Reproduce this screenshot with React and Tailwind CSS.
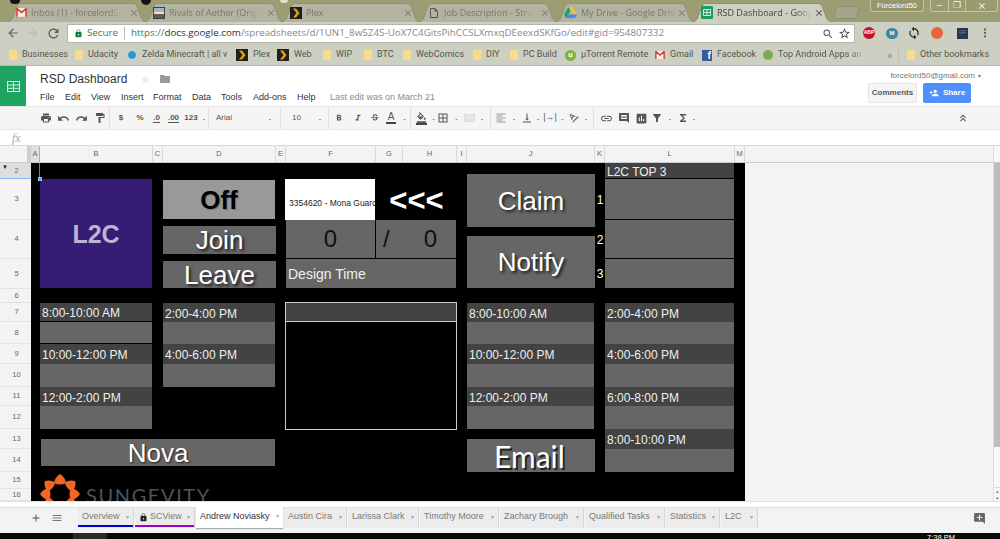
import React from "react";
import {
  MdArrowBack, MdArrowForward, MdRefresh, MdLock, MdSearch, MdStarBorder, MdMoreVert, MdClose,
  MdPrint, MdUndo, MdRedo, MdFormatPaint, MdFormatBold, MdFormatItalic, MdStrikethroughS,
  MdBorderAll, MdFormatAlignLeft, MdLink, MdInsertChart, MdFunctions, MdKeyboardDoubleArrowUp,
  MdFolder, MdStar, MdAddComment, MdPersonAdd, MdInsertComment, MdAdd, MdMenu, MdFormatColorFill,
  MdVerticalAlignBottom, MdFilterAlt, MdOutlineInsertDriveFile, MdSync, MdTextRotationAngleup,
} from "react-icons/md";

const Folder = () => <span className="w-[8px] h-[10px] bg-[#f6dc8c] rounded-[1px] shrink-0" />;

const Plex = () => (
  <svg width="12" height="12" viewBox="0 0 12 12" className="shrink-0">
    <rect width="12" height="12" fill="#1f1f1f" />
    <path d="M3 1.5h3l3.5 4.5-3.5 4.5h-3l3.5-4.5z" fill="#e5a00d" />
  </svg>
);

const GmailIcon = ({ s = 11 }) => (
  <svg width={s} height={s * 0.8} viewBox="0 0 12 10" className="shrink-0">
    <rect width="12" height="10" fill="#f4f1ea" />
    <path d="M0.8 10V0.6L6 5l5.2-4.4V10" fill="none" stroke="#d23f31" strokeWidth="1.8" />
  </svg>
);

const SheetIcon = () => (
  <svg width="12" height="13" viewBox="0 0 12 13" className="shrink-0">
    <rect width="12" height="13" rx="1" fill="#1c9d5f" />
    <path d="M2.5 3.5h7v6h-7zM2.5 6.5h7M6 3.5v6" stroke="#e6f4ec" fill="none" strokeWidth="0.9" />
  </svg>
);

const Drive = () => (
  <svg width="13" height="11" viewBox="0 0 13 11" className="shrink-0">
    <path d="M4.5 0h4l4.5 7h-4z" fill="#f7c32f" />
    <path d="M4.5 0l2 3.5L2 11 0 7.5z" fill="#1ea362" />
    <path d="M4 7.5h9L11 11H2z" fill="#4688f4" />
  </svg>
);

const Rivals = () => (
  <svg width="12" height="12" viewBox="0 0 12 12" className="shrink-0">
    <rect width="12" height="12" fill="#30435c" />
    <rect x="1" y="1" width="10" height="4" fill="#9fb4c8" />
    <rect x="1" y="5" width="10" height="2" fill="#f0e4c0" />
    <rect x="1" y="7" width="10" height="4" fill="#6e5a3e" />
  </svg>
);

const Tab = ({ icon, title, active, first, tw = "w-[90px]" }) => (
  <div className={`relative w-[142px] h-[19px] shrink-0 ${first ? "ml-[6px]" : "-ml-[5px]"} ${active ? "z-10" : ""} flex items-center pl-[10px]`}>
    <svg viewBox="0 0 142 19" preserveAspectRatio="none" className="absolute inset-0 w-full h-full">
      <path
        d="M0 19C4 19 6 17 7 14L11 3C12 1 14 .5 16 .5L126 .5C128 .5 130 1 131 3L135 14C136 17 138 19 142 19"
        fill={active ? "#cdcfc2" : "#b2b3a0"}
        stroke="#8f9079"
        strokeWidth="1"
      />
    </svg>
    <span className="relative flex items-center gap-[4px]">
      {icon}
      <span className={`${tw} overflow-hidden whitespace-nowrap text-[9px] [font-family:'Open_Sans',sans-serif] [mask-image:linear-gradient(90deg,#000_85%,transparent)] ${active ? "text-[#444]" : "text-[#77786a]"}`}>
        {title}
      </span>
    </span>
    <MdClose className={`absolute left-[123px] top-[5px] ${active ? "text-[#444]" : "text-[#7a7b6c]"}`} size={10} />
  </div>
);

const Bookmark = ({ w, icon, label, fade }) => (
  <div className="flex items-center gap-[5px] shrink-0 overflow-hidden" style={{ width: w }}>
    {icon}
    <span className={`whitespace-nowrap ${fade ? "[mask-image:linear-gradient(90deg,#000_80%,transparent)] overflow-hidden w-[88px]" : ""}`}>{label}</span>
  </div>
);

const Caret = () => <span className="text-[7px] text-[#888] leading-none">-</span>;

const Slot = ({ w, children, sep }) => (
  <div className={`flex items-center justify-center shrink-0 h-full ${sep ? "border-r border-[#e0e0e0]" : ""}`} style={{ width: w }}>
    {children}
  </div>
);

const ic = "text-[#555] shrink-0";

const COLS = [
  ["A", 9], ["B", 113], ["C", 10], ["D", 113], ["E", 10], ["F", 90], ["G", 27], ["H", 54],
  ["I", 10], ["J", 128], ["K", 10], ["L", 130], ["M", 10],
];

const ROWS = [
  ["2", 16], ["3", 41], ["4", 39], ["5", 30], ["6", 14], ["7", 19], ["8", 22], ["9", 20],
  ["10", 23], ["11", 19], ["12", 23], ["13", 20], ["14", 23], ["15", 17], ["16", 12],
];

const SheetTab = ({ w, label, color, active, lock }) => (
  <div
    className={`relative shrink-0 flex items-center justify-between pl-[4px] pr-[4px] text-[9px] whitespace-nowrap ${
      active ? "h-[23px] -mt-[3px] bg-white text-[#333] shadow-[0_1px_1px_#aaa]" : "h-[20px] pb-[2px] bg-[#ececec] text-[#7a7a7a] border-r border-[#d6d6d6]"
    }`}
    style={{ width: w }}
  >
    <span className="flex items-center gap-[2px]">
      {lock && <MdLock size={9} className="text-[#222]" />}
      {label}
    </span>
    <span className="text-[#aaa] text-[6px]">▾</span>
    {color && <span className="absolute left-0 right-0 bottom-[1px] h-[2px]" style={{ background: color }} />}
  </div>
);

const Slotted = ({ cls, label, line }) => (
  <div className={`${cls} bg-[#434343] text-[#efefef] text-[12px] pl-[2px] pt-[2px] flex items-center whitespace-nowrap mr-px ${line ? "border-b border-black" : ""}`}>
    {label}
  </div>
);

const Body = ({ cls, line }) => <div className={`${cls} bg-[#666666] mr-px ${line ? "border-b border-black" : ""}`} />;

const bigShadow = "[text-shadow:2px_2px_3px_rgba(0,0,0,0.75)]";

export default function App() {
  return (
    <div className="w-[1000px] h-[539px] overflow-hidden flex flex-col bg-white [font-family:'Liberation_Sans',Arial,sans-serif]">
      {/* Chrome tab strip */}
      <div className="relative h-[22px] bg-[#9c9d73] flex items-end shrink-0">
        <span className="absolute left-[10px] top-0 w-[10px] h-[4px] bg-[#15130f] rounded-b-full" />
        <span className="absolute left-[141px] top-0 w-[10px] h-[5px] bg-[#15130f] rounded-b-full" />
        <span className="absolute left-[280px] top-0 w-[8px] h-[3px] bg-[#dfe0c8] rounded-b-full" />
        <Tab first icon={<GmailIcon />} title="Inbox (1) - forcelord50" />
        <Tab icon={<Rivals />} title="Rivals of Aether (Origin" />
        <Tab icon={<Plex />} title="Plex" />
        <Tab icon={<MdOutlineInsertDriveFile size={12} className="text-[#555] ml-px" />} title="Job Description - Struct" />
        <Tab icon={<Drive />} title="My Drive - Google Driv" tw="w-[98px]" />
        <Tab active icon={<SheetIcon />} title="RSD Dashboard - Goog" tw="w-[94px]" />
        <div className="ml-[2px] mb-[3px] w-[23px] h-[13px] bg-[#a5a687] border border-[#8f9079] -skew-x-12 rounded-[2px] shrink-0" />
        <div className="ml-[12px] self-start h-[12px] w-[54px] border border-t-0 border-[#c4c5a5] bg-[#96976c] rounded-b-[3px] text-[7.5px] text-white text-center leading-[11px] shrink-0">
          Forcelord50
        </div>
        <div className="ml-[6px] self-start h-[12px] w-[68px] flex border border-t-0 border-[#c4c5a5] rounded-b-[3px] bg-[#9a9b70] text-white text-[9px] leading-[10px] shrink-0">
          <span className="w-[18px] text-center border-r border-[#c4c5a5]">–</span>
          <span className="w-[17px] text-center border-r border-[#c4c5a5]">❐</span>
          <span className="flex-1 flex justify-center items-center"><MdClose size={10} /></span>
        </div>
      </div>

      {/* Chrome toolbar */}
      <div className="h-[22px] bg-[#cdcfc2] flex items-center shrink-0 text-[#5c5c52]">
        <MdArrowBack size={14} className="ml-[6px] text-[#666]" />
        <MdArrowForward size={14} className="ml-[6px] text-[#b9baac]" />
        <MdRefresh size={15} className="ml-[6px] text-[#5c5c52]" />
        <div className="ml-[6px] w-[788px] h-[19px] mt-[1px] bg-white rounded-[2px] border border-[#b5b6a8] flex items-center text-[9.8px] [font-family:'Open_Sans',sans-serif] whitespace-nowrap overflow-hidden">
          <MdLock size={9} className="ml-[6px] text-[#0b8043]" />
          <span className="ml-[4px] w-[33px] text-[#2f7d5b]">Secure</span>
          <span className="ml-[4px] w-px h-[13px] bg-[#bbb]" />
          <span className="ml-[6px] w-[540px] overflow-hidden">
            <span className="text-[#2f7d5b]">https://</span>
            <span className="text-[#333]">docs.google.com</span>
            <span className="text-[#888]">/spreadsheets/d/1UN1_8w5Z4S-UoX7C4GitsPihCCSLXmxqDEeexdSKfGo/edit#gid=954807332</span>
          </span>
          <span className="flex-1" />
          <MdSearch size={12} className="text-[#555]" />
          <MdStarBorder size={13} className="ml-[4px] mr-[3px] text-[#444]" />
        </div>
        <span className="ml-[8px] w-[12px] h-[12px] rounded-full bg-[#c8102e] text-white text-[5px] font-bold flex items-center justify-center">ABP</span>
        <span className="ml-[11px] w-[12px] h-[11px] rounded-full bg-[#3d86a8] text-white text-[6px] font-bold flex items-center justify-center">M</span>
        <MdSync size={14} className="ml-[9px] text-[#222]" />
        <span className="ml-[10px] w-[12px] h-[12px] rounded-full bg-[#e8663c]" />
        <span className="ml-[14px] w-[11px] h-[11px] bg-[#26384d] text-[#7f8fa0] text-[5px] flex items-center justify-center">GF</span>
        <MdMoreVert size={14} className="ml-[10px] text-[#666]" />
      </div>

      {/* Bookmarks */}
      <div className="h-[21px] pt-[1px] bg-[#cdcfc2] flex items-center shrink-0 pl-[9px] text-[9px] text-[#55564c] [font-family:'Roboto',sans-serif]">
        <Bookmark w={66} icon={<Folder />} label="Businesses" />
        <Bookmark w={52} icon={<Folder />} label="Udacity" />
        <Bookmark w={109} icon={<span className="w-[10px] h-[10px] rounded-full bg-[#2e9ac4] border border-[#bfe0ee] shrink-0" />} label="Zelda Minecraft | all v" />
        <Bookmark w={41} icon={<Plex />} label="Plex" />
        <Bookmark w={46} icon={<Plex />} label="Web" />
        <Bookmark w={41} icon={<Folder />} label="WIP" />
        <Bookmark w={39} icon={<Folder />} label="BTC" />
        <Bookmark w={70} icon={<Folder />} label="WebComics" />
        <Bookmark w={37} icon={<Folder />} label="DIY" />
        <Bookmark w={55} icon={<Folder />} label="PC Build" />
        <Bookmark w={90} icon={<span className="w-[11px] h-[11px] rounded-full bg-[#7fb13b] text-white text-[8px] leading-[10px] text-center shrink-0 font-bold">u</span>} label="µTorrent Remote" />
        <Bookmark w={47} icon={<GmailIcon s={10} />} label="Gmail" />
        <Bookmark w={61} icon={<span className="w-[10px] h-[11px] bg-[#3b5998] text-white text-[10px] font-bold leading-[12px] text-right pr-px shrink-0">f</span>} label="Facebook" />
        <Bookmark w={124} fade icon={<span className="w-[10px] h-[10px] rounded-full bg-[#7cab4e] shrink-0" />} label="Top Android Apps an" />
        <span className="w-[11px] text-[#888] text-[11px] leading-none">»</span>
        <span className="w-px h-[14px] bg-[#bdbeb0] mr-[8px]" />
        <Bookmark w={90} icon={<Folder />} label="Other bookmarks" />
      </div>

      {/* Sheets header */}
      <div className="h-[41px] bg-white flex shrink-0 border-t border-[#b8b9a8]">
        <div className="w-[26px] bg-[#1ea362] flex items-center justify-center shrink-0">
          <svg width="13" height="11" viewBox="0 0 13 11">
            <rect x=".5" y=".5" width="12" height="10" fill="none" stroke="#d9f0e3" />
            <path d="M.5 4h12M.5 7.300h12M6.500 .5v10" stroke="#d9f0e3" />
          </svg>
        </div>
        <div className="ml-[14px] flex flex-col w-[440px] shrink-0">
          <div className="flex items-center h-[23px] pt-[3px]">
            <span className="text-[12px] text-[#333] leading-none">RSD Dashboard</span>
            <MdStar size={11} className="ml-[13px] text-[#eeeeee]" />
            <MdFolder size={12} className="ml-[8px] text-[#9a9a9a]" />
          </div>
          <div className="flex items-center text-[9px] text-[#333] h-[17px] whitespace-nowrap">
            <span className="w-[25px]">File</span>
            <span className="w-[26px]">Edit</span>
            <span className="w-[30px]">View</span>
            <span className="w-[32px]">Insert</span>
            <span className="w-[39px]">Format</span>
            <span className="w-[29px]">Data</span>
            <span className="w-[32px]">Tools</span>
            <span className="w-[44px]">Add-ons</span>
            <span className="w-[33px]">Help</span>
            <span className="text-[#8a8a8a]">Last edit was on March 21</span>
          </div>
        </div>
        <div className="ml-auto w-[132px] mr-[29px] flex flex-col items-end shrink-0">
          <div className="h-[15px] flex items-center text-[8px] text-[#777] gap-[3px] pt-[5px] -mr-[10px] whitespace-nowrap">
            forcelord50@gmail.com <span className="text-[6px]">▾</span>
          </div>
          <div className="flex gap-[6px] mt-[2px]">
            <div className="w-[49px] h-[20px] bg-[#f5f5f5] border border-[#e4e4e4] rounded-[2px] text-[8px] font-bold text-[#555] flex items-center justify-center">Comments</div>
            <div className="w-[48px] h-[20px] bg-[#4d90fe] rounded-[2px] text-[8px] font-bold text-white flex items-center justify-center gap-[4px]">
              <MdPersonAdd size={10} />Share
            </div>
          </div>
        </div>
      </div>

      {/* Sheets toolbar */}
      <div className="h-[24px] bg-[#f5f5f5] border-y border-[#e6e6e6] flex items-center shrink-0 text-[8px] text-[#555] font-bold">
        <Slot w={37} />
        <Slot w={18}><MdPrint size={12} className={ic} /></Slot>
        <Slot w={17}><MdUndo size={13} className={ic} /></Slot>
        <Slot w={18}><MdRedo size={13} className={ic} /></Slot>
        <Slot w={20} sep><MdFormatPaint size={12} className={ic} /></Slot>
        <Slot w={22}>$</Slot>
        <Slot w={16}>%</Slot>
        <Slot w={17}><span className="border-b border-[#555] leading-[8px]">.0</span></Slot>
        <Slot w={17}><span className="border-b border-[#555] leading-[8px]">.00</span></Slot>
        <Slot w={18}>123</Slot>
        <Slot w={9} sep><Caret /></Slot>
        <Slot w={51}><span className="font-normal text-[8px] -ml-[21px]">Arial</span></Slot>
        <Slot w={21} sep><Caret /></Slot>
        <Slot w={31}><span className="font-normal">10</span></Slot>
        <Slot w={17} sep><Caret /></Slot>
        <Slot w={20}><MdFormatBold size={10} className={ic} /></Slot>
        <Slot w={17}><MdFormatItalic size={10} className={ic} /></Slot>
        <Slot w={17}><MdStrikethroughS size={10} className={ic} /></Slot>
        <Slot w={16}><span className="border-b-2 border-[#444] leading-[10px] px-[2px] text-[10px] font-normal">A</span></Slot>
        <Slot w={12} sep><Caret /></Slot>
        <Slot w={20}><span className="border-b-2 border-[#444] flex"><MdFormatColorFill size={11} className={ic} /></span></Slot>
        <Slot w={5}><Caret /></Slot>
        <Slot w={13}><MdBorderAll size={12} className={ic} /></Slot>
        <Slot w={15}><Caret /></Slot>
        <Slot w={10}><span className="w-[11px] h-[8px] bg-[#e5e5e5] border border-[#ddd] shrink-0" /></Slot>
        <Slot w={17} sep><Caret /></Slot>
        <Slot w={20}><MdFormatAlignLeft size={12} className="text-[#999] shrink-0" /></Slot>
        <Slot w={6}><Caret /></Slot>
        <Slot w={20}><MdVerticalAlignBottom size={12} className={ic} /></Slot>
        <Slot w={2}><Caret /></Slot>
        <Slot w={22}><span className="text-[9px] font-normal">|→|</span></Slot>
        <Slot w={3}><Caret /></Slot>
        <Slot w={20}><MdTextRotationAngleup size={12} className={ic} /></Slot>
        <Slot w={4}><Caret /></Slot>
        <Slot w={6} sep />
        <Slot w={24}><MdLink size={13} className={ic} /></Slot>
        <Slot w={12}><MdInsertComment size={12} className={ic} /></Slot>
        <Slot w={22}><MdInsertChart size={13} className={ic} /></Slot>
        <Slot w={10}><MdFilterAlt size={12} className={ic} /></Slot>
        <Slot w={16}><Caret /></Slot>
        <Slot w={10}><MdFunctions size={12} className={ic} /></Slot>
        <Slot w={12}><Caret /></Slot>
        <MdKeyboardDoubleArrowUp size={12} className={`${ic} ml-[257px]`} />
      </div>

      {/* Formula bar */}
      <div className="h-[16px] bg-white border-b border-[#d9d9d9] flex items-center shrink-0 pl-[12px] text-[12px] italic text-[#aaa] [font-family:'Liberation_Serif',serif]">
        fx
      </div>

      {/* Column headers */}
      <div className="h-[17px] flex shrink-0 bg-[#f3f3f3] text-[7.5px] text-[#666] border-b border-[#ccc]">
        <div className="w-[31px] bg-[#f3f3f3] border-r-4 border-[#cfcfcf] shrink-0" />
        {COLS.map(([c, w]) => (
          <div key={c} className={`shrink-0 flex items-center justify-center border-r ${c === "A" ? "bg-[#dfdfdf] border-[#8ab4f8]" : "border-[#d9d9d9]"}`} style={{ width: w }}>
            {c}
          </div>
        ))}
        <div className="flex-1 flex justify-end"><span className="w-[7px] bg-[#f8f8f8] border-l border-[#ddd]" /></div>
      </div>

      {/* Grid region */}
      <div className="flex h-[338px] shrink-0 bg-[#f3f3f3] overflow-hidden">
        <div className="w-[31px] shrink-0 flex flex-col text-[7.5px] text-[#666]">
          {ROWS.map(([r, h]) => (
            <div key={r} className={`relative shrink-0 flex items-center justify-center border-b pl-[2px] ${r === "2" ? "bg-[#dedede] border-[#8ab4f8]" : "bg-[#f3f3f3] border-[#e2e2e2]"}`} style={{ height: h }}>
              {r === "2" && <span className="absolute left-[2px] top-0 text-[6px] text-[#222]">▼</span>}
              {r}
            </div>
          ))}
        </div>

        <div className="relative w-[714px] h-full bg-black shrink-0 overflow-hidden grid [grid-template-columns:9px_113px_10px_113px_10px_90px_27px_54px_10px_128px_10px_130px_10px] [grid-template-rows:16px_41px_39px_30px_14px_19px_22px_20px_23px_19px_23px_20px_23px_17px_12px]">
          {/* selection handle */}
          <span className="absolute left-[8px] top-0 w-px h-[16px] bg-[#4285f4]" />
          <span className="absolute left-[7px] top-[14px] w-[4px] h-[4px] bg-[#5b95f5] border border-white/40 z-10" />

          {/* L2C */}
          <div className="col-[2] row-[2/5] mr-px mb-px bg-[#351c75] text-[#bdb5cf] font-bold text-[25px] flex items-center justify-center pt-[2px]">L2C</div>

          {/* Off / Join / Leave */}
          <div className="col-[4] row-[2] mr-px mt-px mb-px pt-[1px] bg-[#999999] text-black font-bold text-[26px] flex items-center justify-center [text-shadow:1px_1px_1px_#777]">Off</div>
          <div className={`col-[4] row-[3] mt-[6px] mb-[5px] bg-[#666666] text-white text-[26px] flex items-center justify-center ${bigShadow}`}>Join</div>
          <div className={`col-[4] row-[4] mt-[2px] mb-px pt-[1px] bg-[#666666] text-white text-[26px] flex items-center justify-center ${bigShadow}`}>Leave</div>

          {/* Current task */}
          <div className="col-[6] row-[2] -ml-px mr-px bg-white text-[#222] text-[8.5px] flex items-end pb-[10px] pl-[4px] whitespace-nowrap overflow-hidden">3354620 - Mona Guard</div>
          <div className="col-[7/9] row-[2] pt-[1px] text-white font-bold text-[31px] flex items-center justify-center leading-none">&lt;&lt;&lt;</div>
          <div className="col-[6] row-[3] border-r border-b border-black bg-[#666666] text-[#111] text-[24px] flex items-center justify-center">0</div>
          <div className="col-[7/9] row-[3] mr-px border-b border-black bg-[#666666] text-[#111] text-[24px] flex items-center justify-between pl-[7px] pr-[19px]"><span>/</span><span>0</span></div>
          <div className="col-[6/9] row-[4] mr-px mb-px pt-[1px] bg-[#666666] text-[#efefef] text-[14px] flex items-center pl-[2px]">Design Time</div>

          {/* Claim / Notify */}
          <div className={`col-[10] row-[1/4] mt-[11px] mb-[32px] pt-[1px] bg-[#666666] text-white text-[26px] flex items-center justify-center ${bigShadow}`}>Claim</div>
          <div className={`col-[10] row-[3/5] mt-[16px] mb-px bg-[#666666] text-white text-[26px] flex items-center justify-center ${bigShadow}`}>Notify</div>

          {/* K numbers */}
          <div className="col-[11] row-[2] text-white text-[12px] flex items-center justify-center">1</div>
          <div className="col-[11] row-[3] pt-[1px] text-white text-[12px] flex items-center justify-center">2</div>
          <div className="col-[11] row-[4] text-white text-[12px] flex items-center justify-center">3</div>

          {/* L2C top 3 */}
          <Slotted cls="col-[12] row-[1]" label="L2C TOP 3" line />
          <Body cls="col-[12] row-[2]" line />
          <Body cls="col-[12] row-[3]" line />
          <Body cls="col-[12] row-[4] mb-px" />

          {/* Column B */}
          <Slotted cls="col-[2] row-[6]" label="8:00-10:00 AM" line />
          <Body cls="col-[2] row-[7]" line />
          <Slotted cls="col-[2] row-[8]" label="10:00-12:00 PM" />
          <Body cls="col-[2] row-[9]" />
          <Slotted cls="col-[2] row-[10]" label="12:00-2:00 PM" />
          <Body cls="col-[2] row-[11]" />

          {/* Column D */}
          <Slotted cls="col-[4] row-[6]" label="2:00-4:00 PM" />
          <Body cls="col-[4] row-[7]" />
          <Slotted cls="col-[4] row-[8]" label="4:00-6:00 PM" />
          <Body cls="col-[4] row-[9]" />

          {/* Nova */}
          <div className="col-[2/5] row-[12/14] mt-[10px] ml-px mr-px mb-[6px] pt-[1px] bg-[#666666] text-white text-[26px] flex items-center justify-center [text-shadow:1px_1px_2px_rgba(0,0,0,0.7)]">Nova</div>

          {/* Centre box */}
          <div className="col-[6/9] row-[6/12] -ml-px -mt-px -mb-px flex flex-col border border-[#cccccc]">
            <div className="h-[19px] bg-[#434343] border-b border-[#cccccc] shrink-0" />
          </div>

          {/* Column J */}
          <Slotted cls="col-[10] row-[6]" label="8:00-10:00 AM" />
          <Body cls="col-[10] row-[7]" />
          <Slotted cls="col-[10] row-[8]" label="10:00-12:00 PM" />
          <Body cls="col-[10] row-[9]" />
          <Slotted cls="col-[10] row-[10]" label="12:00-2:00 PM" />
          <Body cls="col-[10] row-[11]" />

          {/* Email */}
          <div className="col-[10] row-[12/14] mt-[10px] pr-[3px] bg-[#666666] text-white text-[30px] leading-none flex items-center justify-center [font-family:Lato,sans-serif] [text-shadow:2px_2px_0_#222]">Email</div>

          {/* Column L */}
          <Slotted cls="col-[12] row-[6]" label="2:00-4:00 PM" />
          <Body cls="col-[12] row-[7]" />
          <Slotted cls="col-[12] row-[8]" label="4:00-6:00 PM" />
          <Body cls="col-[12] row-[9]" />
          <Slotted cls="col-[12] row-[10]" label="6:00-8:00 PM" />
          <Body cls="col-[12] row-[11]" />
          <Slotted cls="col-[12] row-[12]" label="8:00-10:00 PM" />
          <Body cls="col-[12] row-[13]" />

          {/* Logo */}
          <div className="col-[2/5] row-[14/16] flex items-start min-h-0 h-[40px]">
            <svg width="40" height="40" viewBox="-20 -20 40 40" className="mt-[2px] shrink-0">
              {[-90, -50, 0, 50, 90, 130, 180, 230].map((a) => (
                <path key={a} d="M-6 -11 Q-5 -17 0 -20 Q5 -17 6 -11 Q0 -8 -6 -11Z" fill="#f26522" transform={`rotate(${a})`} />
              ))}
            </svg>
            <span className="ml-[6px] mt-[13px] text-[#46555f] text-[20px] leading-none tracking-[1.6px] [font-family:Lato,sans-serif] font-normal whitespace-nowrap">SUNGEVITY</span>
          </div>
        </div>

        <div className="flex-1 flex justify-end">
          <div className="w-[7px] h-full flex flex-col bg-[#f8f8f8] border-l border-[#ddd]">
            <div className="h-[284px] bg-[#bdbdbd]" />
            <div className="flex-1" />
            <div className="h-[14px] text-[5px] text-[#777] text-center leading-[7px] border-t border-[#ddd]">▴<br />▾</div>
          </div>
        </div>
      </div>

      {/* Sheet tabs */}
      <div className="h-[32px] bg-[#f3f3f3] shrink-0 flex flex-col border-t border-[#e0e0e0] relative">
        <div className="h-[6px] bg-white border-b border-[#e0e0e0] shrink-0" />
        <div className="flex items-start flex-1">
          <MdAdd size={12} className="ml-[30px] mt-[4px] text-[#555] shrink-0" />
          <MdMenu size={12} className="ml-[9px] mt-[4px] text-[#777] shrink-0" />
          <div className="ml-[15px] flex gap-[1px]">
            <SheetTab w={56} label="Overview" color="#0000c8" />
            <SheetTab w={60} label="SCView" color="#9900cc" lock />
            <SheetTab w={87} label="Andrew Noviasky" active />
            <SheetTab w={63} label="Austin Cira" />
            <SheetTab w={71} label="Larissa Clark" />
            <SheetTab w={79} label="Timothy Moore" />
            <SheetTab w={84} label="Zachary Brough" />
            <SheetTab w={80} label="Qualified Tasks" />
            <SheetTab w={54} label="Statistics" />
            <SheetTab w={37} label="L2C" />
          </div>
          <MdAddComment size={13} className="ml-auto mr-[14px] mt-[4px] text-[#666] shrink-0" />
        </div>
      </div>

      {/* Desktop taskbar */}
      <div className="flex-1 bg-[#0b0a0a] relative overflow-hidden flex">
        <span className="ml-[73px] w-[34px] bg-[#2a2a2a]" />
        <span className="ml-auto mr-[45px] text-[7.5px] text-white leading-[10px]">7:38 PM</span>
      </div>
    </div>
  );
}
